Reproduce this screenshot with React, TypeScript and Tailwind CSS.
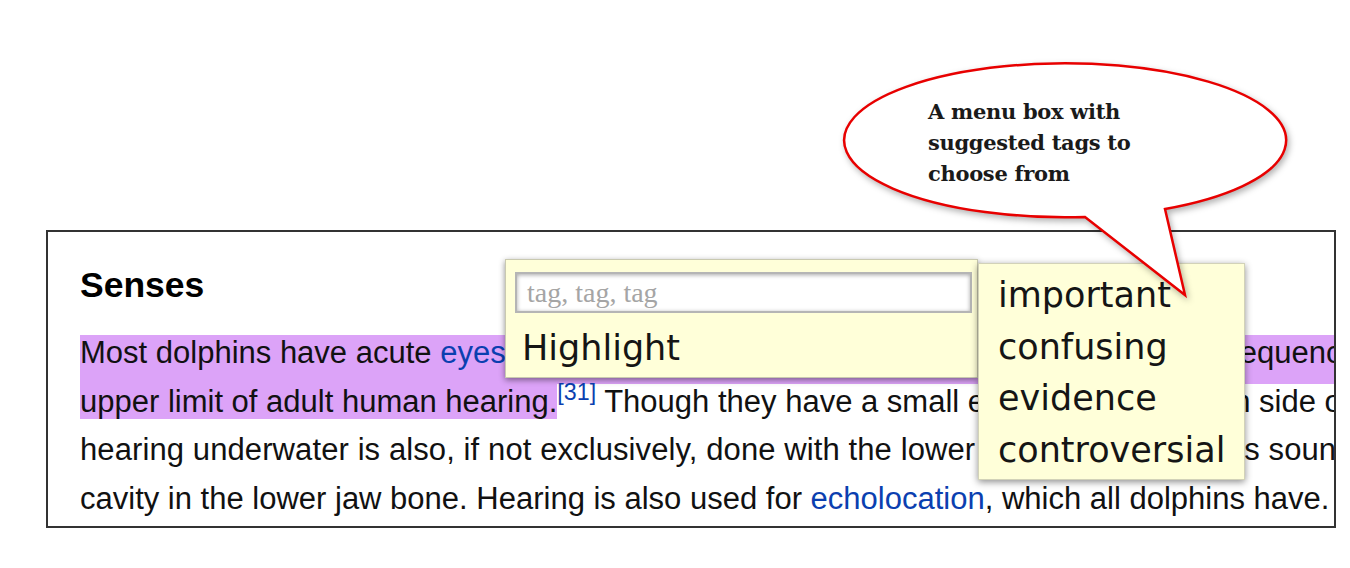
import { FC } from "react";

const suggestions = ["important", "confusing", "evidence", "controversial"];

const TagPopup: FC = () => {
    return (
        <div className="absolute left-[457px] top-[27px] w-[473px] h-[119px] bg-[#ffffd9] border border-[#c9c9b0] shadow-[0_2px_6px_rgba(0,0,0,0.45)]">
            <div className="mt-[12px] ml-[9px] w-[457px] h-[41px] bg-white border-2 border-[#b5b5b5] shadow-[inset_0_1px_4px_rgba(0,0,0,0.35)] flex items-center pl-[10px]">
                <span className="font-['Liberation_Serif',serif] text-[28px] leading-none text-[#a5a5a5]">
                    tag, tag, tag
                </span>
            </div>
            <div className="ml-[16px] mt-[11px] font-['DejaVu_Sans',sans-serif] text-[35px] leading-[48px] text-[#151515]">
                Highlight
            </div>
        </div>
    );
};

const SuggestionMenu: FC = () => {
    return (
        <ul className="absolute left-[930px] top-[31px] w-[267px] h-[217px] bg-[#ffffd9] border border-[#d2d2b8] shadow-[0_2px_7px_rgba(0,0,0,0.45)] pl-[19px] pt-[6px] font-['DejaVu_Sans',sans-serif] text-[35px] leading-[51.5px] text-[#151515]">
            {suggestions.map((s) => (
                <li key={s}>{s}</li>
            ))}
        </ul>
    );
};

const Callout: FC = () => {
    return (
        <div className="absolute left-0 top-0 w-[1350px] h-[568px] pointer-events-none">
            <svg
                width="1350"
                height="568"
                viewBox="0 0 1350 568"
                className="absolute left-0 top-0 drop-shadow-[2px_3px_3px_rgba(0,0,0,0.3)]"
            >
                <path
                    d="M1165 209 A221 77 0 1 0 1085 217 L1185 295 Z"
                    fill="#ffffff"
                    stroke="#e80000"
                    strokeWidth="2.5"
                    strokeLinejoin="miter"
                />
            </svg>
            <div className="absolute left-[928px] top-[96px] font-['DejaVu_Serif',serif] font-bold text-[21px] leading-[31px] text-[#1a1a1a] tracking-[-0.3px]">
                <div>A menu box with</div>
                <div>suggested tags to</div>
                <div>choose from</div>
            </div>
        </div>
    );
};

export default function App() {
    return (
        <div className="relative w-[1350px] h-[568px] bg-white overflow-hidden">
            <div className="absolute left-0 top-0 w-full">
                <div className="ml-[46px] mt-[230px] w-[1290px] h-[298px] border-2 border-[#333] bg-white relative">
                    <div className="w-full h-full overflow-hidden pl-[32px] pt-[33px] font-['Liberation_Sans',Arial,sans-serif] text-[#111]">
                        <h3 className="font-bold text-[35.5px] leading-[40px] text-black">
                            Senses
                        </h3>
                        <div className="mt-[24px] text-[31px] leading-[48.5px] whitespace-nowrap">
                            <div>
                                <span className="bg-[#dca3f8] pb-[14px]">
                                    Most dolphins have acute{" "}
                                    <a className="text-[#0b3fb0]">eyesight</a>,
                                    both in and out of the water, and they can
                                    hear frequencies ten times or more above the
                                </span>
                            </div>
                            <div>
                                <span className="bg-[#dca3f8]">
                                    upper limit of adult human hearing.
                                </span>
                                <sup className="text-[#0b3fb0]">[31]</sup>{" "}
                                Though they have a small ear opening on each
                                side of their head, it is believed
                            </div>
                            <div className="tracking-[0.1px]">
                                hearing underwater is also, if not exclusively,
                                done with the lower jaw, which conducts sound to
                                the middle ear via a fat-filled
                            </div>
                            <div>
                                cavity in the lower jaw bone. Hearing is also
                                used for{" "}
                                <a className="text-[#0b3fb0]">echolocation</a>,
                                which all dolphins have.
                            </div>
                        </div>
                    </div>
                    <TagPopup />
                    <SuggestionMenu />
                </div>
            </div>
            <Callout />
        </div>
    );
}
